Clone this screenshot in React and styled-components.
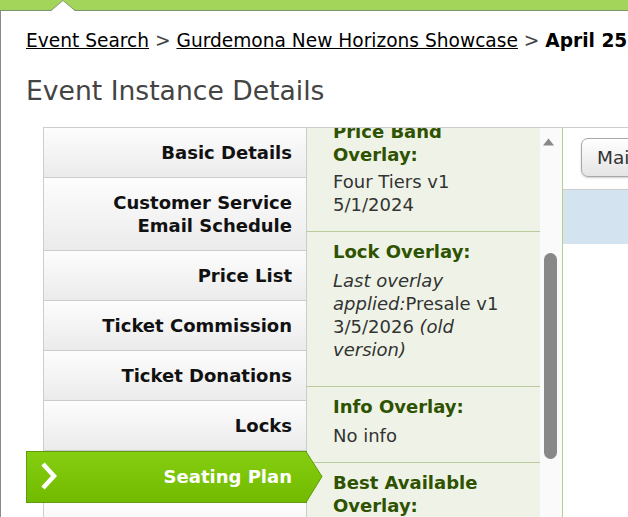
import React from 'react';
import styled, { createGlobalStyle } from 'styled-components';

const Global = createGlobalStyle`
  html, body { margin: 0; padding: 0; background: #fff; }
  body { font-family: "DejaVu Sans", Verdana, sans-serif; overflow: hidden; }
`;

const Page = styled.div`
  width: 628px;
  height: 517px;
  overflow: hidden;
  display: flex;
  flex-direction: column;
`;

const TopBar = styled.div`
  position: relative;
  flex-shrink: 0;
  height: 10px;
  background: #a3d55b;
  border-bottom: 1px solid #7f9270;
`;

const Notch = styled.svg`
  position: absolute;
  left: 51px;
  top: 0;
  display: block;
`;

const Body = styled.div`
  flex: 1;
  min-height: 0;
  overflow: hidden;
  border-left: 1px solid #8a8a8a;
  padding: 18px 0 0 25px;
`;

const Crumbs = styled.div`
  font-size: 18.6px;
  line-height: 23px;
  white-space: nowrap;
  color: #444;
`;

const CrumbLink = styled.a`
  color: #000;
  text-decoration: underline;
`;

const Current = styled.b`
  color: #000;
`;

const Title = styled.h1`
  margin: 24px 0 21px;
  font-size: 26.6px;
  line-height: 30px;
  font-weight: normal;
  color: #444;
  white-space: nowrap;
`;

const Frame = styled.div`
  display: flex;
  margin-left: 17px;
  height: 420px;
  border-top: 1px solid #ccc;
`;

const Nav = styled.div`
  width: 262px;
  flex-shrink: 0;
  border-left: 1px solid #ccc;
  border-right: 1px solid #ccc;
  display: flex;
  flex-direction: column;
`;

const NavItem = styled.div`
  padding: 13px 14px 13px 10px;
  font-size: 18px;
  line-height: 23px;
  font-weight: bold;
  color: #111;
  text-align: right;
  background: linear-gradient(#fdfdfd, #ebebeb);
  border-bottom: 1px solid #ccc;
`;

const ActiveItem = styled.div`
  position: relative;
  display: flex;
  align-items: center;
  justify-content: space-between;
  margin: 0 -1px 0 -18px;
  padding: 13px 15px 14px 13px;
  font-size: 18px;
  line-height: 23px;
  font-weight: bold;
  color: #fff;
  background: linear-gradient(#86ce10, #72ba00);
  border: 1px solid #5f9d0d;
  border-right: none;
  z-index: 2;
`;

const Chevron = styled.svg`
  display: block;
  margin: -3px 0 -2px;
`;

const ArrowTip = styled.svg`
  position: absolute;
  right: -16px;
  top: -1px;
  display: block;
`;

const Middle = styled.div`
  width: 233px;
  flex-shrink: 0;
  background: #eff3e7;
  overflow: hidden;
`;

const MiddleContent = styled.div`
  margin-top: -16px;
`;

const Section = styled.div`
  padding: 8px 8px ${(p) => (p.$extra ? 25 : 15)}px 26px;
  border-bottom: 1px solid #b9cb9b;
`;

const SecHead = styled.div`
  font-size: 18px;
  line-height: 23px;
  font-weight: bold;
  color: #2e5200;
  margin-bottom: ${(p) => (p.$tight ? 4 : 6)}px;
`;

const SecValue = styled.div`
  font-size: 18px;
  line-height: 23px;
  color: #333;
`;

const Track = styled.div`
  width: 22px;
  flex-shrink: 0;
  background: #fafafa;
  border-right: 1px solid #b3d38a;
  display: flex;
  flex-direction: column;
  padding-top: 10px;
`;

const UpArrow = styled.svg`
  display: block;
  margin-left: 3px;
`;

const Thumb = styled.div`
  margin: 107px 0 0 4px;
  width: 13px;
  height: 206px;
  border-radius: 7px;
  background: #888;
`;

const Right = styled.div`
  flex: 1;
  min-width: 0;
  overflow: hidden;
`;

const Toolbar = styled.div`
  padding: 10px 0 12px 18px;
  border-bottom: 1px solid #ccc;
  background: #fff;
  white-space: nowrap;
`;

const Button = styled.button`
  height: 39px;
  padding: 0 15px;
  font-family: "DejaVu Sans", Verdana, sans-serif;
  font-size: 18.5px;
  color: #333;
  border: 1px solid #a8a8a8;
  border-radius: 7px;
  background: linear-gradient(#ffffff, #e4e4e4);
  box-shadow: 0 1px 2px rgba(0, 0, 0, 0.2);
  white-space: nowrap;
`;

const BlueBand = styled.div`
  height: 54px;
  background: #d3e4f0;
`;

const navItems = [
  'Basic Details',
  ['Customer Service', 'Email Schedule'],
  'Price List',
  'Ticket Commission',
  'Ticket Donations',
  'Locks',
];

export default function App() {
  return (
    <Page>
      <Global />
      <TopBar>
        <Notch width="24" height="11" viewBox="0 0 24 11">
          <polygon points="0,11 12,0.5 24,11" fill="#fff" />
          <polyline points="0,10.5 12,0.5 24,10.5" fill="none" stroke="#8a9a7c" strokeWidth="1" />
        </Notch>
      </TopBar>
      <Body>
        <Crumbs>
          <CrumbLink>Event Search</CrumbLink> &gt;{' '}
          <CrumbLink>Gurdemona New Horizons Showcase</CrumbLink> &gt;{' '}
          <Current>April 25, 2026 7:30 PM</Current>
        </Crumbs>
        <Title>Event Instance Details</Title>
        <Frame>
          <Nav>
            {navItems.map((it, i) => (
              <NavItem key={i}>
                {Array.isArray(it) ? (
                  <>
                    {it[0]}
                    <br />
                    {it[1]}
                  </>
                ) : (
                  it
                )}
              </NavItem>
            ))}
            <ActiveItem>
              <Chevron width="17" height="28" viewBox="0 0 17 28">
                <path d="M3 2 L14 14 L3 26" fill="none" stroke="#fff" strokeWidth="4.5" strokeLinejoin="miter" />
              </Chevron>
              <span>Seating Plan</span>
              <ArrowTip width="17" height="52" viewBox="0 0 17 52">
                <defs>
                  <linearGradient id="ag" x1="0" y1="0" x2="0" y2="1">
                    <stop offset="0" stopColor="#86ce10" />
                    <stop offset="1" stopColor="#72ba00" />
                  </linearGradient>
                </defs>
                <polygon points="0,0.5 16,25.5 0,51.5" fill="url(#ag)" />
                <polyline points="0,0.5 16,25.5 0,51.5" fill="none" stroke="#5f9d0d" strokeWidth="1" />
              </ArrowTip>
            </ActiveItem>
            <NavItem>Ticket Fees</NavItem>
          </Nav>
          <Middle>
            <MiddleContent>
              <Section>
                <SecHead $tight>Price Band Overlay:</SecHead>
                <SecValue>
                  Four Tiers v1
                  <br />
                  5/1/2024
                </SecValue>
              </Section>
              <Section $extra>
                <SecHead>Lock Overlay:</SecHead>
                <SecValue>
                  <i>Last overlay applied:</i>Presale v1 3/5/2026 <i>(old version)</i>
                </SecValue>
              </Section>
              <Section>
                <SecHead>Info Overlay:</SecHead>
                <SecValue>No info</SecValue>
              </Section>
              <Section>
                <SecHead>Best Available Overlay:</SecHead>
                <SecValue>Standard</SecValue>
              </Section>
            </MiddleContent>
          </Middle>
          <Track>
            <UpArrow width="11" height="8" viewBox="0 0 11 8">
              <polygon points="5.5,0.5 11,7.5 0,7.5" fill="#888" />
            </UpArrow>
            <Thumb />
          </Track>
          <Right>
            <Toolbar>
              <Button>Main Details</Button>
            </Toolbar>
            <BlueBand />
          </Right>
        </Frame>
      </Body>
    </Page>
  );
}
